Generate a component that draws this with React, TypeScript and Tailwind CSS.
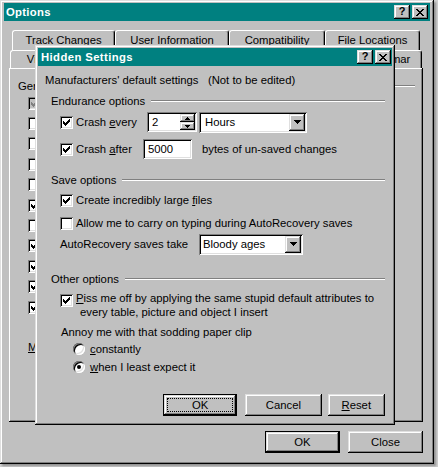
import React from 'react';

// Win98 style bevels
const raised =
  'shadow-[inset_-1px_-1px_#000,inset_1px_1px_#dfdfdf,inset_-2px_-2px_#808080,inset_2px_2px_#fff]';
const sunken =
  'shadow-[inset_1px_1px_#808080,inset_-1px_-1px_#fff,inset_2px_2px_#000,inset_-2px_-2px_#dfdfdf]';

function CheckMark({ color = '#000' }: { color?: string }) {
  return (
    <svg
      className="absolute left-[3px] top-[3px]"
      width="7"
      height="7"
      viewBox="0 0 7 7"
      shapeRendering="crispEdges"
    >
      <path
        fill={color}
        d="M6 0h1v1H6zM5 1h2v1H5zM0 2h1v1H0zM4 2h3v1H4zM0 3h2v1H0zM3 3h3v1H3zM0 4h5v1H0zM1 5h3v1H1zM2 6h1v1H2z"
      />
    </svg>
  );
}

function CheckBox({ checked = false, disabled = false }: { checked?: boolean; disabled?: boolean }) {
  return (
    <span
      className={`relative inline-block w-[13px] h-[13px] shrink-0 ${
        disabled ? 'bg-[#c0c0c0]' : 'bg-white'
      } ${sunken}`}
    >
      {checked && <CheckMark color={disabled ? '#808080' : '#000'} />}
    </span>
  );
}

function Radio({ on = false }: { on?: boolean }) {
  return (
    <span className={`relative inline-block w-[12px] h-[12px] rounded-full bg-white shrink-0 ${sunken}`}>
      {on && <span className="absolute left-[4px] top-[4px] w-[4px] h-[4px] rounded-full bg-black" />}
    </span>
  );
}

function DownArrow() {
  return (
    <svg width="7" height="4" viewBox="0 0 7 4" shapeRendering="crispEdges">
      <path fill="#000" d="M0 0h7v1H0zM1 1h5v1H1zM2 2h3v1H2zM3 3h1v1H3z" />
    </svg>
  );
}

function TitleButtons() {
  return (
    <div className="flex gap-[2px]">
      <div className={`w-[16px] h-[14px] bg-[#c0c0c0] flex items-center justify-center ${raised}`}>
        <span className="text-[11px] font-bold leading-none text-black pb-[1px]">?</span>
      </div>
      <div className={`w-[16px] h-[14px] bg-[#c0c0c0] flex items-center justify-center ${raised}`}>
        <svg width="8" height="7" viewBox="0 0 8 7" shapeRendering="crispEdges">
          <path
            fill="#000"
            d="M0 0h2v1H0zM6 0h2v1H6zM1 1h2v1H1zM5 1h2v1H5zM2 2h4v1H2zM3 3h2v1H3zM2 4h4v1H2zM1 5h2v1H1zM5 5h2v1H5zM0 6h2v1H0zM6 6h2v1H6z"
          />
        </svg>
      </div>
    </div>
  );
}

function Button({
  children,
  className,
  isDefault = false,
  focused = false,
}: {
  children: React.ReactNode;
  className: string;
  isDefault?: boolean;
  focused?: boolean;
}) {
  return (
    <div className={`bg-[#c0c0c0] ${isDefault ? 'border border-black' : ''} ${className}`}>
      <div className={`relative w-full h-full flex items-center justify-center ${raised}`}>
        {focused && <span className="absolute inset-[3px] border border-dotted border-black" />}
        <span>{children}</span>
      </div>
    </div>
  );
}

function Combo({ value, className, textPad }: { value: string; className: string; textPad: string }) {
  return (
    <div className={`relative bg-white flex items-center ${sunken} ${className}`}>
      <span className={textPad}>{value}</span>
      <div
        className={`absolute right-[2px] top-[2px] bottom-[2px] w-[16px] bg-[#c0c0c0] flex items-center justify-center ${raised}`}
      >
        <DownArrow />
      </div>
    </div>
  );
}

function Spinner() {
  return (
    <div className={`relative w-[50px] h-[20px] bg-white flex items-center ${sunken}`}>
      <span className="pl-[5px]">2</span>
      <div className="absolute right-[2px] top-[2px] bottom-[2px] w-[15px] flex flex-col">
        <div className={`flex-1 bg-[#c0c0c0] flex items-center justify-center ${raised}`}>
          <svg width="5" height="3" viewBox="0 0 5 3" shapeRendering="crispEdges">
            <path fill="#000" d="M2 0h1v1H2zM1 1h3v1H1zM0 2h5v1H0z" />
          </svg>
        </div>
        <div className={`flex-1 bg-[#c0c0c0] flex items-center justify-center ${raised}`}>
          <svg width="5" height="3" viewBox="0 0 5 3" shapeRendering="crispEdges">
            <path fill="#000" d="M0 0h5v1H0zM1 1h3v1H1zM2 2h1v1H2z" />
          </svg>
        </div>
      </div>
    </div>
  );
}

function Group({ label, className }: { label: string; className: string }) {
  return (
    <div className={`h-[20px] flex items-center ${className}`}>
      <span className="ml-[6px]">{label}</span>
      <div className="flex-1 ml-[6px] border-t border-t-[#808080] border-b border-b-white" />
    </div>
  );
}

const tabBase =
  'h-full flex items-center justify-center bg-[#c0c0c0] border-t border-l border-t-white border-l-white border-r border-r-black rounded-t-[3px] shadow-[inset_-1px_0_#808080]';

// left column of the General tab, labels sit under the Hidden Settings dialog
const generalOptions = [
  { id: 'repag', checked: true, disabled: true },
  { id: 'wphelp' },
  { id: 'wpnav' },
  { id: 'blue' },
  { id: 'sound' },
  { id: 'anim', checked: true },
  { id: 'confirm' },
  { id: 'links', checked: true },
  { id: 'mail', checked: true },
  { id: 'recent', checked: true },
  { id: 'macro', checked: true },
];

function HiddenSettings() {
  return (
    <div className={`absolute left-[35px] top-[45px] w-[360px] h-[380px] bg-[#c0c0c0] p-[3px] ${raised}`}>
      <div className="h-[18px] bg-[#008080] flex items-center justify-between pl-[3px] pr-[1px]">
        <span className="text-white font-bold tracking-[0.4px]">Hidden Settings</span>
        <TitleButtons />
      </div>

      <div className="ml-[7px] w-[340px]">
        <div className="mt-[4px] h-[20px] flex items-center">
          Manufacturers' default settings&nbsp;&nbsp;&nbsp;(Not to be edited)
        </div>

        <Group label="Endurance options" className="mt-[1px]" />

        <div className="mt-[1px] h-[20px] flex items-center ml-[15px]">
          <CheckBox checked />
          <span className="ml-[3px] w-[71px]">
            Crash <u>e</u>very
          </span>
          <Spinner />
          <Combo value="Hours" className="ml-[2px] w-[108px] h-[21px]" textPad="pl-[6px]" />
        </div>

        <div className="mt-[7px] h-[20px] flex items-center ml-[15px]">
          <CheckBox checked />
          <span className="ml-[3px] w-[67px]">
            Crash <u>a</u>fter
          </span>
          <div className={`w-[49px] h-[20px] bg-white flex items-center ${sunken}`}>
            <span className="pl-[5px]">5000</span>
          </div>
          <span className="ml-[10px]">bytes of un-saved changes</span>
        </div>

        <Group label="Save options" className="mt-[11px]" />

        <div className="h-[20px] flex items-center ml-[15px]">
          <CheckBox checked />
          <span className="ml-[3px]">
            Create incredibly large <u>f</u>iles
          </span>
        </div>

        <div className="mt-[3px] h-[20px] flex items-center ml-[15px]">
          <CheckBox />
          <span className="ml-[3px]">Allow me to carry on typing during AutoRecovery saves</span>
        </div>

        <div className="mt-[1px] h-[20px] flex items-center ml-[15px]">
          <span className="w-[139px]">AutoRecovery saves take</span>
          <Combo value="Bloody ages" className="w-[104px] h-[21px]" textPad="pl-[4px]" />
        </div>

        <Group label="Other options" className="mt-[15px]" />

        <div className="mt-[2px] flex items-start ml-[15px]">
          <span className="mt-[3px]">
            <CheckBox checked />
          </span>
          <div className="ml-[3px] leading-[14px]">
            <div>
              <u>P</u>iss me off by applying the same stupid default attributes to
            </div>
            <div className="pl-[4px]">every table, picture and object I insert</div>
          </div>
        </div>

        <div className="mt-[5px] h-[16px] flex items-center ml-[16px]">
          Annoy me with that sodding paper clip
        </div>

        <div className="h-[18px] flex items-center ml-[28px]">
          <Radio />
          <span className="ml-[5px]">
            <u>c</u>onstantly
          </span>
        </div>
        <div className="h-[18px] flex items-center ml-[28px]">
          <Radio on />
          <span className="ml-[5px]">
            <u>w</u>hen I least expect it
          </span>
        </div>

        <div className="mt-[18px] flex h-[22px] ml-[118px]">
          <Button className="w-[75px] h-[22px]" isDefault focused>
            OK
          </Button>
          <Button className="ml-[8px] w-[77px] h-[22px]">Cancel</Button>
          <Button className="ml-[6px] w-[58px] h-[22px]">
            <u>R</u>eset
          </Button>
        </div>
      </div>
    </div>
  );
}

export default function App() {
  return (
    <div className="w-[438px] h-[467px] bg-[#d0d0d0] text-black text-[11.3px] leading-[13px] font-['Liberation_Sans',Arial,sans-serif]">
      <div
        className={`relative w-[434px] h-[464px] bg-[#c0c0c0] px-[4px] pt-[3px] flex flex-col shadow-[inset_-1px_-1px_#000,inset_1px_1px_#dfdfdf,inset_-2px_-2px_#808080,inset_2px_2px_#fff,2px_2px_2px_rgba(0,0,0,0.3)]`}
      >
        <div className="h-[18px] shrink-0 bg-[#008080] flex items-center justify-between pl-[2px] pr-[2px]">
          <span className="text-white font-bold tracking-[0.3px]">Options</span>
          <TitleButtons />
        </div>

        <div className="mt-[9px] ml-[8px] flex h-[20px] shrink-0">
          <div className={`w-[103px] ${tabBase}`}>Track Changes</div>
          <div className={`w-[114px] ${tabBase}`}>User Information</div>
          <div className={`w-[96px] ${tabBase}`}>Compatibility</div>
          <div className={`w-[95px] ${tabBase}`}>File Locations</div>
        </div>
        <div className="ml-[6px] flex h-[18px] shrink-0">
          <div className={`w-[58px] ${tabBase}`}>View</div>
          <div className={`w-[62px] ${tabBase}`} />
          <div className={`w-[55px] ${tabBase}`} />
          <div className={`w-[55px] ${tabBase}`} />
          <div className={`w-[57px] ${tabBase}`} />
          <div className={`w-[125px] ${tabBase}`}>Spelling &amp; Grammar</div>
        </div>

        <div className="ml-[5px] w-[414px] h-[354px] shrink-0 pl-[9px] pt-[11px] shadow-[inset_-1px_-1px_#000,inset_1px_1px_#fff,inset_-2px_-2px_#808080]">
          <div className="h-[14px] flex items-center mr-[8px]">
            <span>General options</span>
            <div className="flex-1 ml-[6px] border-t border-t-[#808080] border-b border-b-white" />
          </div>
          {generalOptions.map((opt) => (
            <div key={opt.id} className="h-[20.4px] flex items-center ml-[10px]">
              <CheckBox checked={opt.checked} disabled={opt.disabled} />
            </div>
          ))}
          <div className="mt-[23px] h-[14px] flex items-center ml-[10px]">
            <u>M</u>easurement units:
          </div>
        </div>

        <div className="mt-[9px] flex justify-end pr-[7px] shrink-0">
          <Button className="w-[75px] h-[22px]" isDefault>
            OK
          </Button>
          <Button className="ml-[8px] w-[75px] h-[22px]">Close</Button>
        </div>

        <HiddenSettings />
      </div>
    </div>
  );
}
